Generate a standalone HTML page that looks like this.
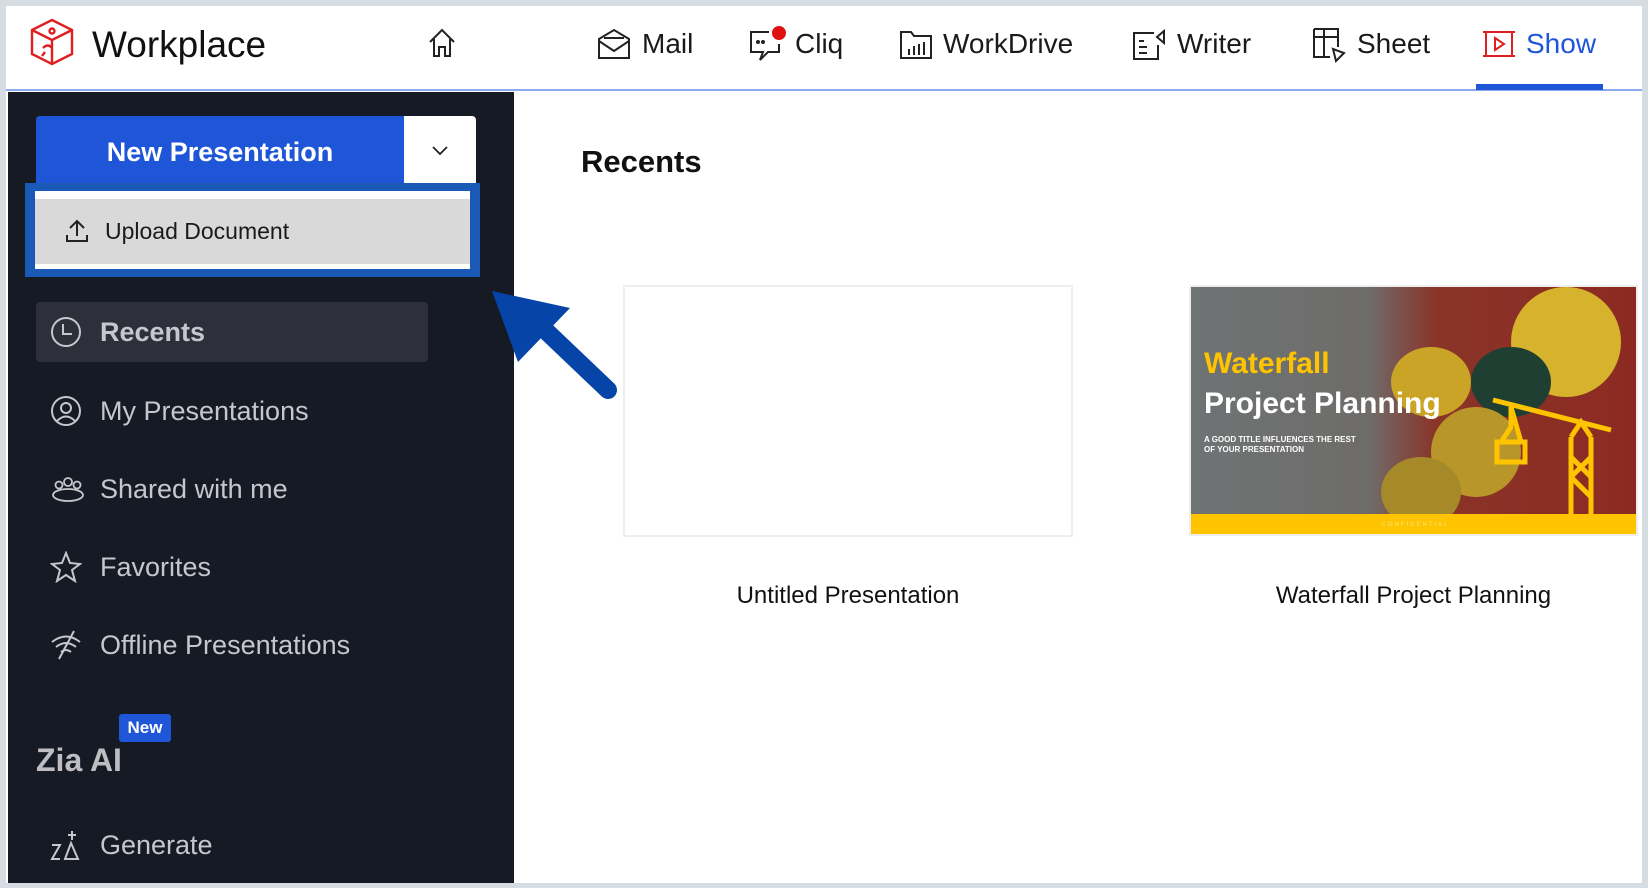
<!DOCTYPE html>
<html><head><meta charset="utf-8"><style>
*{margin:0;padding:0;box-sizing:border-box}
body{width:1648px;height:888px;background:#d6dde2;font-family:"Liberation Sans",sans-serif;position:relative;overflow:hidden}
.frame{position:absolute;left:6px;top:6px;width:1636px;height:877px;background:#fff}
.hdr{position:absolute;left:0;top:0;width:1636px;height:85px;border-bottom:2px solid #8aa9ef;background:#fff}
.abs{position:absolute}
.nav{position:absolute;top:20px;font-size:28px;color:#1a1a1a;line-height:36px;white-space:nowrap}
.side{position:absolute;left:2px;top:86px;width:506px;height:791px;background:#161a25}
.item{position:absolute;left:28px;width:392px;height:60px;color:#c6c7cc;font-size:27px;line-height:60px;padding-left:64px;white-space:nowrap}
.item svg{position:absolute;left:14px;top:14px}
</style></head><body>
<div class="frame">
 <div class="hdr">
  <svg class="abs" style="left:23px;top:12px" width="46" height="48" viewBox="0 0 46 48" fill="none" stroke="#e02020" stroke-width="2.4"><path d="M23 2 L43 12 V36 L23 46 L3 36 V12 Z M3 12 L23 22 L43 12 M23 22 V46"/><circle cx="23" cy="13" r="2.5"/><path d="M14 30 q5 -5 9 0 M16 34 l-3 4"/></svg>
  <div class="nav" style="left:86px;top:16px;font-size:37px;line-height:46px;color:#111">Workplace</div>
  <svg class="abs" style="left:422px;top:21px" width="28" height="32" viewBox="0 0 28 32" fill="none" stroke="#222" stroke-width="2"><path d="M2 15 L14 3 L26 15 M6 12 V29 H11 V20 H17 V29 H22 V12"/></svg>
  <svg class="abs" style="left:591px;top:21px" width="34" height="34" viewBox="0 0 34 34" fill="none" stroke="#222" stroke-width="2"><path d="M2 12 L17 3 L32 12 V31 H2 Z M2 14 L17 24 L32 14 M7 11 h20"/></svg>
  <div class="nav" style="left:636px">Mail</div>
  <svg class="abs" style="left:743px;top:18px" width="40" height="38" viewBox="0 0 40 38" fill="none" stroke="#222" stroke-width="2"><path d="M20 8 H2 V28 H14 L11 36 L19 28 H30 V20"/><circle cx="9" cy="18" r="1"/><circle cx="14" cy="18" r="1"/><circle cx="30" cy="9" r="7" fill="#e01010" stroke="none"/></svg>
  <div class="nav" style="left:789px">Cliq</div>
  <svg class="abs" style="left:893px;top:22px" width="34" height="32" viewBox="0 0 34 32" fill="none" stroke="#222" stroke-width="2"><path d="M2 4 H12 L15 8 H32 V30 H2 Z"/><path d="M10 27 V21 M15 27 V18 M20 27 V16 M25 27 V14" stroke-width="2"/></svg>
  <div class="nav" style="left:937px">WorkDrive</div>
  <svg class="abs" style="left:1126px;top:21px" width="34" height="34" viewBox="0 0 34 34" fill="none" stroke="#222" stroke-width="2"><path d="M22 6 H2 V32 H26 V18 M7 14 h5 M7 20 h8 M7 26 h8 M32 4 L25 10 L32 16 Z"/></svg>
  <div class="nav" style="left:1171px">Writer</div>
  <svg class="abs" style="left:1306px;top:19px" width="34" height="38" viewBox="0 0 34 38" fill="none" stroke="#222" stroke-width="2"><path d="M2 4 H26 V22 M2 4 V32 H18 M2 12 H26 M12 4 V32 M21 24 L32 28 L24 36 Z"/></svg>
  <div class="nav" style="left:1351px">Sheet</div>
  <svg class="abs" style="left:1476px;top:22px" width="34" height="32" viewBox="0 0 34 32" fill="none" stroke="#e02020" stroke-width="2"><path d="M1 4 H33 M1 28 H33 M4 4 V28 M30 4 V28 M13 10 L22 16 L13 22 Z"/></svg>
  <div class="nav" style="left:1520px;color:#1f56d8">Show</div>
  <div class="abs" style="left:1470px;top:78px;width:127px;height:6px;background:#1f56d8"></div>
 </div>
 <div class="side">
  <div class="abs" style="left:28px;top:24px;width:368px;height:67px;background:#1f56d8;border-radius:4px 0 0 0;color:#fff;font-size:27px;font-weight:bold;text-align:center;line-height:72px;white-space:nowrap">New Presentation</div>
  <div class="abs" style="left:396px;top:24px;width:72px;height:67px;background:#fff;border-radius:0 4px 0 0"><svg class="abs" style="left:28px;top:30px" width="16" height="10" viewBox="0 0 16 10" fill="none" stroke="#222" stroke-width="1.8"><path d="M1 1 L8 8 L15 1"/></svg></div>
  <div class="abs" style="left:17px;top:91px;width:455px;height:94px;background:#1a59b5;padding:8px 10px"><div style="background:#fff;height:78px;padding:8px 0 5px"><div style="background:#d9d9d9;height:65px;position:relative;color:#1a1a1a;font-size:23px;line-height:65px;padding-left:70px;white-space:nowrap">
   <svg class="abs" style="left:30px;top:20px" width="24" height="24" viewBox="0 0 24 24" fill="none" stroke="#222" stroke-width="2"><path d="M12 17 V2 M5 9 L12 2 L19 9 M2 16 V22 H22 V16"/></svg>Upload Document</div></div></div>
  <div class="item" style="top:210px;background:#2d303a;border-radius:4px;font-weight:bold">
   <svg width="32" height="32" viewBox="0 0 32 32" fill="none" stroke="#c6c7cc" stroke-width="2"><circle cx="16" cy="16" r="14"/><path d="M13 8 V18 H22"/></svg>Recents</div>
  <div class="item" style="top:289px"><svg width="32" height="32" viewBox="0 0 32 32" fill="none" stroke="#c6c7cc" stroke-width="2"><circle cx="16" cy="16" r="14"/><circle cx="16" cy="13" r="5"/><path d="M7 26 q9 -9 18 0"/></svg>My Presentations</div>
  <div class="item" style="top:367px"><svg width="36" height="32" viewBox="0 0 36 32" fill="none" stroke="#c6c7cc" stroke-width="1.8"><circle cx="18" cy="9" r="4"/><circle cx="9" cy="12" r="3.5"/><circle cx="27" cy="12" r="3.5"/><ellipse cx="18" cy="22" rx="15" ry="6"/></svg>Shared with me</div>
  <div class="item" style="top:445px"><svg width="32" height="32" viewBox="0 0 32 32" fill="none" stroke="#c6c7cc" stroke-width="2"><path d="M16 2 L20 12 L30 13 L22 19 L25 30 L16 24 L7 30 L10 19 L2 13 L12 12 Z"/></svg>Favorites</div>
  <div class="item" style="top:523px"><svg width="32" height="32" viewBox="0 0 32 32" fill="none" stroke="#c6c7cc" stroke-width="2"><path d="M2 13 q14 -11 28 0 M6 18 q10 -8 20 0 M11 23 q5 -4 10 0 M24 2 L9 30"/></svg>Offline Presentations</div>
  <div class="abs" style="left:111px;top:622px;width:52px;height:28px;background:#1f56d8;border-radius:3px;color:#fff;font-size:17px;font-weight:bold;text-align:center;line-height:28px">New</div>
  <div class="abs" style="left:28px;top:650px;color:#bdbdc2;font-size:32px;font-weight:bold">Zia AI</div>
  <div class="item" style="top:723px"><svg width="34" height="32" viewBox="0 0 34 32" fill="none" stroke="#c6c7cc" stroke-width="2"><path d="M2 16 h8 L2 30 h8 M15 30 L21 14 L28 30 Z M22 2 v9 M18 6 h8"/></svg>Generate</div>
 </div>
 <div class="abs" style="left:575px;top:138px;font-size:31px;font-weight:bold;color:#111">Recents</div>
 <div class="abs" style="left:617px;top:279px;width:450px;height:252px;border:2px solid #eee;background:#fff"></div>
 <div class="abs" style="left:1183px;top:279px;width:449px;height:251px;border:2px solid #eee;overflow:hidden;background:linear-gradient(90deg,#6f7374 0%,#6e6c6a 40%,#8a3428 55%,#8c2a22 100%)">
  <div class="abs" style="left:200px;top:60px;width:80px;height:70px;border-radius:50%;background:#c9a426"></div>
  <div class="abs" style="left:320px;top:0;width:110px;height:110px;border-radius:50%;background:#d7b22c"></div>
  <div class="abs" style="left:280px;top:60px;width:80px;height:70px;border-radius:50%;background:#1f3f33"></div>
  <div class="abs" style="left:240px;top:120px;width:90px;height:90px;border-radius:50%;background:#b9962a"></div>
  <div class="abs" style="left:190px;top:170px;width:80px;height:70px;border-radius:50%;background:#a68a2a"></div>
  <div class="abs" style="left:13px;top:60px;color:#ffc400;font-size:30px;font-weight:bold">Waterfall</div>
  <div class="abs" style="left:13px;top:100px;color:#fff;font-size:30px;font-weight:bold;white-space:nowrap">Project Planning</div>
  <div class="abs" style="left:13px;top:148px;color:#fff;font-size:8px;font-weight:bold;line-height:10px">A GOOD TITLE INFLUENCES THE REST<br>OF YOUR PRESENTATION</div>
  <svg class="abs" style="left:300px;top:110px" width="130" height="120" viewBox="0 0 130 120" fill="none" stroke="#ffc400" stroke-width="5"><path d="M2 3 L120 33 M80 120 V40 M100 120 V40 M80 40 L90 25 L100 40 M80 60 L100 80 M80 80 L100 100 M100 60 L80 80 M20 10 V30 L10 45 H30 Z M6 45 h28 v20 h-28 Z"/></svg>
  <div class="abs" style="left:0;top:227px;width:449px;height:20px;background:#ffc400;color:#ffe27a;font-size:6px;text-align:center;line-height:22px;letter-spacing:2px">CONFIDENTIAL</div>
 </div>
 <div class="abs" style="left:617px;top:576px;width:450px;text-align:center;font-size:24px;color:#111">Untitled Presentation</div>
 <div class="abs" style="left:1183px;top:576px;width:449px;text-align:center;font-size:24px;color:#111">Waterfall Project Planning</div>
</div>
<svg class="abs" style="left:0;top:0" width="1648" height="888"><path d="M608 390 L545 330" stroke="#0744a8" stroke-width="18" stroke-linecap="round"/><path d="M492 291 L570 308 L518 362 Z" fill="#0744a8"/></svg>
</body></html>
